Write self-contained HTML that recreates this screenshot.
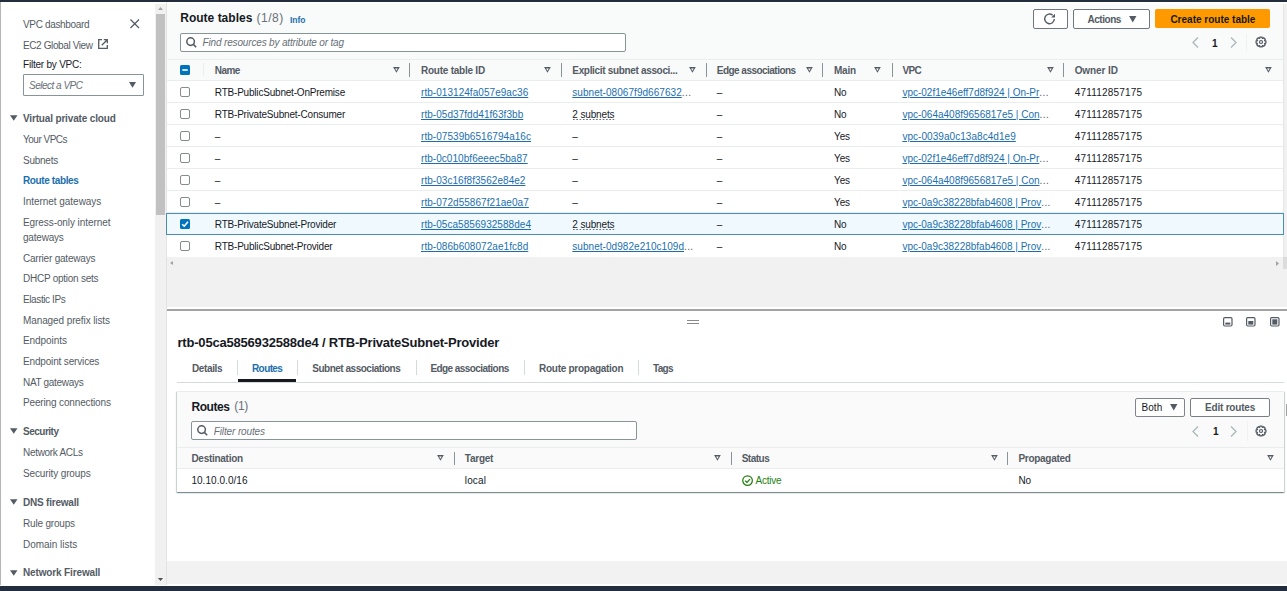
<!DOCTYPE html><html><head><meta charset="utf-8"><style>
html,body{margin:0;padding:0;}
body{width:1287px;height:591px;overflow:hidden;position:relative;background:#fff;font-family:"Liberation Sans",sans-serif;}
body>div{position:absolute;white-space:nowrap;}
body>svg{position:absolute;overflow:visible;}
.u{text-decoration:underline;text-underline-offset:0.5px;text-decoration-thickness:1px;}
.dot{border-bottom:1px dashed #879596;}
</style></head><body>
<div style="left:166px;top:4px;width:1121px;height:76px;background:#f9fafa;"></div>
<div style="left:166px;top:80px;width:1118px;height:176px;background:#fff;"></div>
<div style="left:166px;top:257px;width:1118px;height:12px;background:#f1f1f1;"></div>
<div style="left:166px;top:268.8px;width:1121px;height:38.6px;background:#f1f1f1;"></div>
<div style="left:166px;top:309px;width:1121px;height:1.5px;background:#a3a3a3;"></div>
<div style="left:166px;top:561px;width:1121px;height:23px;background:#f2f2f2;"></div>
<div style="left:0px;top:585.6px;width:1287px;height:5.4px;background:#222d3d;"></div>
<div style="left:0px;top:0px;width:1287px;height:2.4px;background:#222d3d;"></div>
<div style="left:0px;top:2px;width:1px;height:583px;background:#b5b5b5;"></div>
<div style="left:155px;top:4px;width:11px;height:581px;background:#f1f1f1;"></div>
<div style="left:156px;top:14px;width:9px;height:201px;background:#c1c1c1;"></div>
<div style="left:166px;top:2px;width:1px;height:583px;background:#e3e3e3;"></div>
<div style="left:1283px;top:4px;width:4px;height:253px;background:#f1f1f1;border-left:1px solid #e6e6e6;box-sizing:border-box;"></div>
<div style="left:1283px;top:257px;width:4px;height:12px;background:#dcdcdc;"></div>
<div style="left:23px;top:19.93px;font-size:10px;line-height:10px;color:#545b64;letter-spacing:-0.34px;">VPC dashboard</div>
<svg style="left:130px;top:19px" width="9.5" height="9.5" viewBox="0 0 10 10"><path d="M0.5 0.5L9.5 9.5M9.5 0.5L0.5 9.5" stroke="#545b64" stroke-width="1.3" fill="none"/></svg>
<div style="left:23px;top:41.03px;font-size:10px;line-height:10px;color:#545b64;letter-spacing:-0.39px;">EC2 Global View</div>
<svg style="left:98px;top:39px" width="10" height="10" viewBox="0 0 10 10"><path d="M4 0.7H0.7V9.3H9.3V6" stroke="#545b64" stroke-width="1.3" fill="none"/><path d="M3.8 6.2L9 1M5.8 0.7H9.3V4.2" stroke="#545b64" stroke-width="1.3" fill="none"/></svg>
<div style="left:23px;top:59.73px;font-size:10px;line-height:10px;color:#16191f;letter-spacing:-0.22px;">Filter by VPC:</div>
<div style="left:23px;top:74px;width:121px;height:21.6px;border:1px solid #879596;box-sizing:border-box;border-radius:1px;background:#fff;"></div>
<div style="left:29px;top:80.53px;font-size:10px;line-height:10px;color:#687078;font-style:italic;letter-spacing:-0.5px;">Select a VPC</div>
<svg style="left:128.5px;top:82.2px" width="7" height="6" viewBox="0 0 7 6"><path d="M0 0H7L3.5 5.8Z" fill="#545b64"/></svg>
<svg style="left:10px;top:114.7px" width="7.5" height="6" viewBox="0 0 8 6"><path d="M0 0H8L4 6Z" fill="#545b64"/></svg>
<div style="left:23px;top:113.53px;font-size:10px;line-height:10px;color:#545b64;font-weight:700;letter-spacing:-0.16px;">Virtual private cloud</div>
<div style="left:23px;top:134.84px;font-size:10px;line-height:10px;color:#545b64;letter-spacing:-0.5px;">Your VPCs</div>
<div style="left:23px;top:155.53px;font-size:10px;line-height:10px;color:#545b64;letter-spacing:-0.25px;">Subnets</div>
<div style="left:23px;top:176.23px;font-size:10px;line-height:10px;color:#1b6fae;font-weight:700;letter-spacing:-0.38px;">Route tables</div>
<div style="left:23px;top:196.94px;font-size:10px;line-height:10px;color:#545b64;letter-spacing:-0.04px;">Internet gateways</div>
<div style="left:23px;top:217.73px;font-size:10px;line-height:10px;color:#545b64;letter-spacing:-0.08px;">Egress-only internet</div>
<div style="left:23px;top:232.73px;font-size:10px;line-height:10px;color:#545b64;letter-spacing:-0.2px;">gateways</div>
<div style="left:23px;top:253.53px;font-size:10px;line-height:10px;color:#545b64;letter-spacing:-0.21px;">Carrier gateways</div>
<div style="left:23px;top:273.84px;font-size:10px;line-height:10px;color:#545b64;letter-spacing:-0.25px;">DHCP option sets</div>
<div style="left:23px;top:294.84px;font-size:10px;line-height:10px;color:#545b64;letter-spacing:-0.39px;">Elastic IPs</div>
<div style="left:23px;top:315.54px;font-size:10px;line-height:10px;color:#545b64;letter-spacing:-0.1px;">Managed prefix lists</div>
<div style="left:23px;top:335.94px;font-size:10px;line-height:10px;color:#545b64;letter-spacing:-0.06px;">Endpoints</div>
<div style="left:23px;top:356.54px;font-size:10px;line-height:10px;color:#545b64;letter-spacing:-0.16px;">Endpoint services</div>
<div style="left:23px;top:377.74px;font-size:10px;line-height:10px;color:#545b64;letter-spacing:-0.31px;">NAT gateways</div>
<div style="left:23px;top:398.04px;font-size:10px;line-height:10px;color:#545b64;letter-spacing:-0.15px;">Peering connections</div>
<svg style="left:10px;top:428.3px" width="7.5" height="6" viewBox="0 0 8 6"><path d="M0 0H8L4 6Z" fill="#545b64"/></svg>
<div style="left:23px;top:427.14px;font-size:10px;line-height:10px;color:#545b64;font-weight:700;letter-spacing:-0.5px;">Security</div>
<div style="left:23px;top:448.44px;font-size:10px;line-height:10px;color:#545b64;letter-spacing:-0.31px;">Network ACLs</div>
<div style="left:23px;top:468.74px;font-size:10px;line-height:10px;color:#545b64;letter-spacing:-0.13px;">Security groups</div>
<svg style="left:10px;top:499.09999999999997px" width="7.5" height="6" viewBox="0 0 8 6"><path d="M0 0H8L4 6Z" fill="#545b64"/></svg>
<div style="left:23px;top:497.94px;font-size:10px;line-height:10px;color:#545b64;font-weight:700;letter-spacing:-0.21px;">DNS firewall</div>
<div style="left:23px;top:518.93px;font-size:10px;line-height:10px;color:#545b64;letter-spacing:-0.18px;">Rule groups</div>
<div style="left:23px;top:539.53px;font-size:10px;line-height:10px;color:#545b64;letter-spacing:-0.02px;">Domain lists</div>
<svg style="left:10px;top:569.5px" width="7.5" height="6" viewBox="0 0 8 6"><path d="M0 0H8L4 6Z" fill="#545b64"/></svg>
<div style="left:23px;top:568.33px;font-size:10px;line-height:10px;color:#545b64;font-weight:700;letter-spacing:-0.14px;">Network Firewall</div>
<svg style="left:158px;top:7.4px" width="5" height="3" viewBox="0 0 5 3"><path d="M0 3H5L2.5 0Z" fill="#a3a3a3"/></svg>
<svg style="left:158px;top:578px" width="5" height="3" viewBox="0 0 5 3"><path d="M0 0H5L2.5 3Z" fill="#505050"/></svg>
<div style="left:180.3px;top:12.44px;font-size:12px;line-height:12px;color:#16191f;font-weight:700;">Route tables</div>
<div style="left:256.5px;top:12.44px;font-size:12px;line-height:12px;color:#687078;letter-spacing:0.5px;">(1/8)</div>
<div style="left:290px;top:16.10px;font-size:8.5px;line-height:8.5px;color:#1b6fae;font-weight:700;letter-spacing:-0.05px;">Info</div>
<div style="left:1033px;top:9px;width:34.5px;height:19.5px;box-sizing:border-box;border-radius:2px;border:1px solid #6f767d;background:#fff;"></div>
<svg style="left:1044px;top:13px" width="12" height="12" viewBox="0 0 12 12"><path d="M10.3 6A4.8 4.8 0 1 1 8.6 2.2" stroke="#545b64" stroke-width="1.4" fill="none"/><path d="M11 0.8V4.6H7.2Z" fill="#545b64"/></svg>
<div style="left:1073px;top:9px;width:77px;height:19.5px;box-sizing:border-box;border-radius:2px;border:1px solid #6f767d;background:#fff;"></div>
<div style="left:1087.4px;top:15.04px;font-size:10px;line-height:10px;color:#545b64;font-weight:700;letter-spacing:-0.45px;">Actions</div>
<svg style="left:1129px;top:15.5px" width="7.5" height="6.5" viewBox="0 0 8 7"><path d="M0 0H8L4 7Z" fill="#545b64"/></svg>
<div style="left:1155.3px;top:9.4px;width:114.3px;height:19px;box-sizing:border-box;border-radius:2px;background:#ff9900;border:1px solid #ff9900;border-radius:1.5px;"></div>
<div style="left:1170.4px;top:15.04px;font-size:10px;line-height:10px;color:#16191f;font-weight:700;">Create route table</div>
<svg style="left:1191.6px;top:37px" width="7" height="11" viewBox="0 0 7 11"><path d="M6 0.5L1 5.5L6 10.5" stroke="#aab7b8" stroke-width="1.3" fill="none"/></svg>
<div style="left:1212px;top:38.53px;font-size:10px;line-height:10px;color:#16191f;font-weight:700;">1</div>
<svg style="left:1229.8px;top:37px" width="7" height="11" viewBox="0 0 7 11"><path d="M1 0.5L6 5.5L1 10.5" stroke="#aab7b8" stroke-width="1.3" fill="none"/></svg>
<div style="left:1245.5px;top:33px;width:1px;height:19px;background:#f0f1f1;"></div>
<svg style="left:1254.6px;top:36.4px" width="12" height="12" viewBox="0 0 12 12"><path d="M9.65 4.63 L10.88 4.91 L10.88 7.09 L9.65 7.37 L9.55 7.61 L10.22 8.68 L8.68 10.22 L7.61 9.55 L7.37 9.65 L7.09 10.88 L4.91 10.88 L4.63 9.65 L4.39 9.55 L3.32 10.22 L1.78 8.68 L2.45 7.61 L2.35 7.37 L1.12 7.09 L1.12 4.91 L2.35 4.63 L2.45 4.39 L1.78 3.32 L3.32 1.78 L4.39 2.45 L4.63 2.35 L4.91 1.12 L7.09 1.12 L7.37 2.35 L7.61 2.45 L8.68 1.78 L10.22 3.32 L9.55 4.39Z" stroke="#545b64" stroke-width="1.3" fill="none" stroke-linejoin="round"/><circle cx="6" cy="6" r="1.5" stroke="#545b64" stroke-width="1.2" fill="none"/></svg>
<div style="left:180px;top:32.6px;width:446px;height:19.2px;box-sizing:border-box;border:1px solid #879596;border-radius:2px;background:#fff;"></div>
<svg style="left:185.6px;top:36.9px" width="11" height="11" viewBox="0 0 11 11"><circle cx="4.6" cy="4.6" r="3.8" stroke="#545b64" stroke-width="1.5" fill="none"/><path d="M7.4 7.4L10.2 10.2" stroke="#545b64" stroke-width="1.5"/></svg>
<div style="left:202.6px;top:38.33px;font-size:10px;line-height:10px;color:#687078;font-style:italic;letter-spacing:-0.16px;">Find resources by attribute or tag</div>
<div style="left:166px;top:59px;width:1117px;height:1px;background:#eaeded;"></div>
<div style="left:166px;top:79.5px;width:1117px;height:1px;background:#eaeded;"></div>
<svg style="left:180px;top:65px" width="10" height="10" viewBox="0 0 10 10"><rect x="0" y="0" width="10" height="10" rx="1.5" fill="#0073bb"/><path d="M2.3 5H7.7" stroke="#fff" stroke-width="1.6"/></svg>
<div style="left:203px;top:63px;width:1px;height:13px;background:#eaeded;"></div>
<div style="left:214.8px;top:66.33px;font-size:10px;line-height:10px;color:#545b64;font-weight:700;letter-spacing:-0.6px;">Name</div>
<svg style="left:392.8px;top:67px" width="7" height="6" viewBox="0 0 7 6"><path d="M0.1 0.1H6.8L3.45 5.7Z M2.1 1.5H4.8L3.45 3.8Z" fill="#545b64" fill-rule="evenodd"/></svg>
<div style="left:409.2px;top:63.2px;width:1px;height:13.7px;background:#879596;"></div>
<div style="left:421px;top:66.33px;font-size:10px;line-height:10px;color:#545b64;font-weight:700;letter-spacing:-0.24px;">Route table ID</div>
<svg style="left:544.3px;top:67px" width="7" height="6" viewBox="0 0 7 6"><path d="M0.1 0.1H6.8L3.45 5.7Z M2.1 1.5H4.8L3.45 3.8Z" fill="#545b64" fill-rule="evenodd"/></svg>
<div style="left:560.6px;top:63.2px;width:1px;height:13.7px;background:#879596;"></div>
<div style="left:572.3px;top:66.33px;font-size:10px;line-height:10px;color:#545b64;font-weight:700;letter-spacing:-0.33px;">Explicit subnet associ...</div>
<svg style="left:688.6px;top:67px" width="7" height="6" viewBox="0 0 7 6"><path d="M0.1 0.1H6.8L3.45 5.7Z M2.1 1.5H4.8L3.45 3.8Z" fill="#545b64" fill-rule="evenodd"/></svg>
<div style="left:705.8px;top:63.2px;width:1px;height:13.7px;background:#879596;"></div>
<div style="left:716.8px;top:66.33px;font-size:10px;line-height:10px;color:#545b64;font-weight:700;letter-spacing:-0.53px;">Edge associations</div>
<svg style="left:806px;top:67px" width="7" height="6" viewBox="0 0 7 6"><path d="M0.1 0.1H6.8L3.45 5.7Z M2.1 1.5H4.8L3.45 3.8Z" fill="#545b64" fill-rule="evenodd"/></svg>
<div style="left:822.2px;top:63.2px;width:1px;height:13.7px;background:#879596;"></div>
<div style="left:834px;top:66.33px;font-size:10px;line-height:10px;color:#545b64;font-weight:700;letter-spacing:-0.22px;">Main</div>
<svg style="left:874.2px;top:67px" width="7" height="6" viewBox="0 0 7 6"><path d="M0.1 0.1H6.8L3.45 5.7Z M2.1 1.5H4.8L3.45 3.8Z" fill="#545b64" fill-rule="evenodd"/></svg>
<div style="left:891.5px;top:63.2px;width:1px;height:13.7px;background:#879596;"></div>
<div style="left:902.4px;top:66.33px;font-size:10px;line-height:10px;color:#545b64;font-weight:700;letter-spacing:-0.6px;">VPC</div>
<svg style="left:1047px;top:67px" width="7" height="6" viewBox="0 0 7 6"><path d="M0.1 0.1H6.8L3.45 5.7Z M2.1 1.5H4.8L3.45 3.8Z" fill="#545b64" fill-rule="evenodd"/></svg>
<div style="left:1063.3px;top:63.2px;width:1px;height:13.7px;background:#879596;"></div>
<div style="left:1074.7px;top:66.33px;font-size:10px;line-height:10px;color:#545b64;font-weight:700;letter-spacing:-0.1px;">Owner ID</div>
<svg style="left:1265.2px;top:67px" width="7" height="6" viewBox="0 0 7 6"><path d="M0.1 0.1H6.8L3.45 5.7Z M2.1 1.5H4.8L3.45 3.8Z" fill="#545b64" fill-rule="evenodd"/></svg>
<div style="left:166px;top:101.5px;width:1117px;height:1px;background:#eaeded;"></div>
<div style="left:180px;top:87.2px;width:10px;height:10px;box-sizing:border-box;border:1.3px solid #858b8f;border-radius:2px;background:#fff;"></div>
<div style="left:214.8px;top:87.83px;font-size:10px;line-height:10px;color:#16191f;letter-spacing:-0.2px;">RTB-PublicSubnet-OnPremise</div>
<div class="u" style="left:421px;top:87.83px;font-size:10px;line-height:10px;color:#1b6fae;letter-spacing:0.05px;">rtb-013124fa057e9ac36</div>
<div style="left:572.3px;top:87.83px;font-size:10px;line-height:10px;color:#1b6fae;letter-spacing:0.05px;"><span class="u">subnet-08067f9d667632</span><span style="color:#545b64;letter-spacing:0.4px">...</span></div>
<div style="left:716.8px;top:87.83px;font-size:10px;line-height:10px;color:#16191f;">–</div>
<div style="left:834px;top:87.83px;font-size:10px;line-height:10px;color:#16191f;letter-spacing:-0.1px;">No</div>
<div style="left:902.4px;top:87.83px;font-size:10px;line-height:10px;color:#1b6fae;"><span class="u">vpc-02f1e46eff7d8f924 | On-Pr</span><span style="color:#545b64;letter-spacing:0.4px">...</span></div>
<div style="left:1074.7px;top:87.83px;font-size:10px;line-height:10px;color:#16191f;letter-spacing:0.19px;">471112857175</div>
<div style="left:166px;top:123.5px;width:1117px;height:1px;background:#eaeded;"></div>
<div style="left:180px;top:109.2px;width:10px;height:10px;box-sizing:border-box;border:1.3px solid #858b8f;border-radius:2px;background:#fff;"></div>
<div style="left:214.8px;top:109.83px;font-size:10px;line-height:10px;color:#16191f;letter-spacing:-0.2px;">RTB-PrivateSubnet-Consumer</div>
<div class="u" style="left:421px;top:109.83px;font-size:10px;line-height:10px;color:#1b6fae;letter-spacing:0.05px;">rtb-05d37fdd41f63f3bb</div>
<div style="left:572.3px;top:109.83px;font-size:10px;line-height:10px;color:#16191f;letter-spacing:-0.13px;">2 subnets</div>
<div style="left:572.6px;top:118.69999999999999px;width:43px;height:1.2px;background:linear-gradient(to right,#687078 45%,transparent 45%) repeat-x 0 0/3.3px 1.2px;"></div>
<div style="left:716.8px;top:109.83px;font-size:10px;line-height:10px;color:#16191f;">–</div>
<div style="left:834px;top:109.83px;font-size:10px;line-height:10px;color:#16191f;letter-spacing:-0.1px;">No</div>
<div style="left:902.4px;top:109.83px;font-size:10px;line-height:10px;color:#1b6fae;"><span class="u">vpc-064a408f9656817e5 | Con</span><span style="color:#545b64;letter-spacing:0.4px">...</span></div>
<div style="left:1074.7px;top:109.83px;font-size:10px;line-height:10px;color:#16191f;letter-spacing:0.19px;">471112857175</div>
<div style="left:166px;top:145.5px;width:1117px;height:1px;background:#eaeded;"></div>
<div style="left:180px;top:131.2px;width:10px;height:10px;box-sizing:border-box;border:1.3px solid #858b8f;border-radius:2px;background:#fff;"></div>
<div style="left:214.8px;top:131.84px;font-size:10px;line-height:10px;color:#16191f;letter-spacing:-0.2px;">–</div>
<div class="u" style="left:421px;top:131.84px;font-size:10px;line-height:10px;color:#1b6fae;letter-spacing:0.05px;">rtb-07539b6516794a16c</div>
<div style="left:572.3px;top:131.84px;font-size:10px;line-height:10px;color:#16191f;">–</div>
<div style="left:716.8px;top:131.84px;font-size:10px;line-height:10px;color:#16191f;">–</div>
<div style="left:834px;top:131.84px;font-size:10px;line-height:10px;color:#16191f;letter-spacing:-0.1px;">Yes</div>
<div style="left:902.4px;top:131.84px;font-size:10px;line-height:10px;color:#1b6fae;letter-spacing:0.05px;"><span class="u">vpc-0039a0c13a8c4d1e9</span></div>
<div style="left:1074.7px;top:131.84px;font-size:10px;line-height:10px;color:#16191f;letter-spacing:0.19px;">471112857175</div>
<div style="left:166px;top:167.5px;width:1117px;height:1px;background:#eaeded;"></div>
<div style="left:180px;top:153.2px;width:10px;height:10px;box-sizing:border-box;border:1.3px solid #858b8f;border-radius:2px;background:#fff;"></div>
<div style="left:214.8px;top:153.84px;font-size:10px;line-height:10px;color:#16191f;letter-spacing:-0.2px;">–</div>
<div class="u" style="left:421px;top:153.84px;font-size:10px;line-height:10px;color:#1b6fae;letter-spacing:0.05px;">rtb-0c010bf6eeec5ba87</div>
<div style="left:572.3px;top:153.84px;font-size:10px;line-height:10px;color:#16191f;">–</div>
<div style="left:716.8px;top:153.84px;font-size:10px;line-height:10px;color:#16191f;">–</div>
<div style="left:834px;top:153.84px;font-size:10px;line-height:10px;color:#16191f;letter-spacing:-0.1px;">Yes</div>
<div style="left:902.4px;top:153.84px;font-size:10px;line-height:10px;color:#1b6fae;"><span class="u">vpc-02f1e46eff7d8f924 | On-Pr</span><span style="color:#545b64;letter-spacing:0.4px">...</span></div>
<div style="left:1074.7px;top:153.84px;font-size:10px;line-height:10px;color:#16191f;letter-spacing:0.19px;">471112857175</div>
<div style="left:166px;top:189.5px;width:1117px;height:1px;background:#eaeded;"></div>
<div style="left:180px;top:175.2px;width:10px;height:10px;box-sizing:border-box;border:1.3px solid #858b8f;border-radius:2px;background:#fff;"></div>
<div style="left:214.8px;top:175.84px;font-size:10px;line-height:10px;color:#16191f;letter-spacing:-0.2px;">–</div>
<div class="u" style="left:421px;top:175.84px;font-size:10px;line-height:10px;color:#1b6fae;letter-spacing:0.05px;">rtb-03c16f8f3562e84e2</div>
<div style="left:572.3px;top:175.84px;font-size:10px;line-height:10px;color:#16191f;">–</div>
<div style="left:716.8px;top:175.84px;font-size:10px;line-height:10px;color:#16191f;">–</div>
<div style="left:834px;top:175.84px;font-size:10px;line-height:10px;color:#16191f;letter-spacing:-0.1px;">Yes</div>
<div style="left:902.4px;top:175.84px;font-size:10px;line-height:10px;color:#1b6fae;"><span class="u">vpc-064a408f9656817e5 | Con</span><span style="color:#545b64;letter-spacing:0.4px">...</span></div>
<div style="left:1074.7px;top:175.84px;font-size:10px;line-height:10px;color:#16191f;letter-spacing:0.19px;">471112857175</div>
<div style="left:166px;top:211.5px;width:1117px;height:1px;background:#eaeded;"></div>
<div style="left:180px;top:197.2px;width:10px;height:10px;box-sizing:border-box;border:1.3px solid #858b8f;border-radius:2px;background:#fff;"></div>
<div style="left:214.8px;top:197.84px;font-size:10px;line-height:10px;color:#16191f;letter-spacing:-0.2px;">–</div>
<div class="u" style="left:421px;top:197.84px;font-size:10px;line-height:10px;color:#1b6fae;letter-spacing:0.05px;">rtb-072d55867f21ae0a7</div>
<div style="left:572.3px;top:197.84px;font-size:10px;line-height:10px;color:#16191f;">–</div>
<div style="left:716.8px;top:197.84px;font-size:10px;line-height:10px;color:#16191f;">–</div>
<div style="left:834px;top:197.84px;font-size:10px;line-height:10px;color:#16191f;letter-spacing:-0.1px;">Yes</div>
<div style="left:902.4px;top:197.84px;font-size:10px;line-height:10px;color:#1b6fae;"><span class="u">vpc-0a9c38228bfab4608 | Prov</span><span style="color:#545b64;letter-spacing:0.4px">...</span></div>
<div style="left:1074.7px;top:197.84px;font-size:10px;line-height:10px;color:#16191f;letter-spacing:0.19px;">471112857175</div>
<div style="left:166px;top:213px;width:1118px;height:22px;box-sizing:border-box;border:1px solid #4a8db5;background:#f0f9fe;"></div>
<svg style="left:180px;top:219.2px" width="10" height="10" viewBox="0 0 10 10"><rect x="0" y="0" width="10" height="10" rx="1.5" fill="#0073bb"/><path d="M2.2 5.2L4.2 7.2L8 2.8" stroke="#fff" stroke-width="1.6" fill="none"/></svg>
<div style="left:214.8px;top:219.84px;font-size:10px;line-height:10px;color:#16191f;letter-spacing:-0.2px;">RTB-PrivateSubnet-Provider</div>
<div class="u" style="left:421px;top:219.84px;font-size:10px;line-height:10px;color:#1b6fae;letter-spacing:0.05px;">rtb-05ca5856932588de4</div>
<div style="left:572.3px;top:219.84px;font-size:10px;line-height:10px;color:#16191f;letter-spacing:-0.13px;">2 subnets</div>
<div style="left:572.6px;top:229.4px;width:43px;height:1.2px;background:linear-gradient(to right,#687078 45%,transparent 45%) repeat-x 0 0/3.3px 1.2px;"></div>
<div style="left:716.8px;top:219.84px;font-size:10px;line-height:10px;color:#16191f;">–</div>
<div style="left:834px;top:219.84px;font-size:10px;line-height:10px;color:#16191f;letter-spacing:-0.1px;">No</div>
<div style="left:902.4px;top:219.84px;font-size:10px;line-height:10px;color:#1b6fae;"><span class="u">vpc-0a9c38228bfab4608 | Prov</span><span style="color:#545b64;letter-spacing:0.4px">...</span></div>
<div style="left:1074.7px;top:219.84px;font-size:10px;line-height:10px;color:#16191f;letter-spacing:0.19px;">471112857175</div>
<div style="left:180px;top:241.2px;width:10px;height:10px;box-sizing:border-box;border:1.3px solid #858b8f;border-radius:2px;background:#fff;"></div>
<div style="left:214.8px;top:241.84px;font-size:10px;line-height:10px;color:#16191f;letter-spacing:-0.2px;">RTB-PublicSubnet-Provider</div>
<div class="u" style="left:421px;top:241.84px;font-size:10px;line-height:10px;color:#1b6fae;letter-spacing:0.05px;">rtb-086b608072ae1fc8d</div>
<div style="left:572.3px;top:241.84px;font-size:10px;line-height:10px;color:#1b6fae;letter-spacing:0.05px;"><span class="u">subnet-0d982e210c109d</span><span style="color:#545b64;letter-spacing:0.4px">...</span></div>
<div style="left:716.8px;top:241.84px;font-size:10px;line-height:10px;color:#16191f;">–</div>
<div style="left:834px;top:241.84px;font-size:10px;line-height:10px;color:#16191f;letter-spacing:-0.1px;">No</div>
<div style="left:902.4px;top:241.84px;font-size:10px;line-height:10px;color:#1b6fae;"><span class="u">vpc-0a9c38228bfab4608 | Prov</span><span style="color:#545b64;letter-spacing:0.4px">...</span></div>
<div style="left:1074.7px;top:241.84px;font-size:10px;line-height:10px;color:#16191f;letter-spacing:0.19px;">471112857175</div>
<svg style="left:170px;top:261px" width="3" height="4" viewBox="0 0 3 4"><path d="M3 0V4L0 2Z" fill="#a3a3a3"/></svg>
<svg style="left:1276px;top:260.5px" width="3" height="5" viewBox="0 0 3 5"><path d="M0 0V5L3 2.5Z" fill="#a3a3a3"/></svg>
<div style="left:686.7px;top:319.8px;width:12.2px;height:1.2px;background:#8a8a8a;"></div>
<div style="left:686.7px;top:322.6px;width:12.2px;height:1.2px;background:#8a8a8a;"></div>
<svg style="left:1222.8px;top:317px" width="9.6" height="9.6" viewBox="0 0 9.6 9.6"><rect x="0.6" y="0.6" width="8.4" height="8.4" rx="1.2" stroke="#545b64" stroke-width="1.2" fill="none"/><rect x="2.3" y="5.6" width="5" height="2" fill="#545b64"/></svg>
<svg style="left:1246.2px;top:317px" width="9.6" height="9.6" viewBox="0 0 9.6 9.6"><rect x="0.6" y="0.6" width="8.4" height="8.4" rx="1.2" stroke="#545b64" stroke-width="1.2" fill="none"/><rect x="2.3" y="4" width="5" height="3.6" fill="#545b64"/></svg>
<svg style="left:1269.6px;top:317px" width="9.6" height="9.6" viewBox="0 0 9.6 9.6"><rect x="0.6" y="0.6" width="8.4" height="8.4" rx="1.2" stroke="#545b64" stroke-width="1.2" fill="none"/><rect x="2.3" y="2.3" width="5" height="5.3" fill="#545b64"/></svg>
<div style="left:177.5px;top:336.30px;font-size:13px;line-height:13px;color:#16191f;font-weight:700;letter-spacing:-0.2px;">rtb-05ca5856932588de4 / RTB-PrivateSubnet-Provider</div>
<div style="left:177px;top:381.7px;width:1107px;height:1.2px;background:#d5dbdb;"></div>
<div style="left:192px;top:364.14px;font-size:10px;line-height:10px;color:#545b64;font-weight:700;letter-spacing:-0.37px;">Details</div>
<div style="left:252px;top:364.14px;font-size:10px;line-height:10px;color:#1b6fae;font-weight:700;letter-spacing:-0.6px;">Routes</div>
<div style="left:312.2px;top:364.14px;font-size:10px;line-height:10px;color:#545b64;font-weight:700;letter-spacing:-0.48px;">Subnet associations</div>
<div style="left:430.4px;top:364.14px;font-size:10px;line-height:10px;color:#545b64;font-weight:700;letter-spacing:-0.56px;">Edge associations</div>
<div style="left:539px;top:364.14px;font-size:10px;line-height:10px;color:#545b64;font-weight:700;letter-spacing:-0.27px;">Route propagation</div>
<div style="left:653px;top:364.14px;font-size:10px;line-height:10px;color:#545b64;font-weight:700;letter-spacing:-0.7px;">Tags</div>
<div style="left:237.4px;top:360.3px;width:1px;height:15.2px;background:#d5dbdb;"></div>
<div style="left:296.6px;top:360.3px;width:1px;height:15.2px;background:#d5dbdb;"></div>
<div style="left:415.5px;top:360.3px;width:1px;height:15.2px;background:#d5dbdb;"></div>
<div style="left:523.8px;top:360.3px;width:1px;height:15.2px;background:#d5dbdb;"></div>
<div style="left:638.2px;top:360.3px;width:1px;height:15.2px;background:#d5dbdb;"></div>
<div style="left:238.3px;top:379.3px;width:57.8px;height:2.6px;background:#16191f;"></div>
<div style="left:176.8px;top:391px;width:1107.5px;height:100.5px;box-sizing:border-box;background:#fafafa;box-shadow:0 1px 1px 0 rgba(0,28,36,.3),1px 1px 1px 0 rgba(0,28,36,.15),-1px 1px 1px 0 rgba(0,28,36,.15);border-top:1px solid #eaeded;"></div>
<div style="left:176.8px;top:469px;width:1107.5px;height:22px;background:#fff;"></div>
<div style="left:176.8px;top:447px;width:1107.5px;height:1px;background:#eaeded;"></div>
<div style="left:176.8px;top:468px;width:1107.5px;height:1px;background:#eaeded;"></div>
<div style="left:191.4px;top:400.54px;font-size:12px;line-height:12px;color:#16191f;font-weight:700;letter-spacing:-0.42px;">Routes</div>
<div style="left:234.2px;top:400.34px;font-size:12px;line-height:12px;color:#687078;letter-spacing:-0.3px;">(1)</div>
<div style="left:191px;top:421px;width:446px;height:19.3px;box-sizing:border-box;border:1px solid #879596;border-radius:2px;background:#fff;"></div>
<svg style="left:196.8px;top:425.4px" width="11" height="11" viewBox="0 0 11 11"><circle cx="4.6" cy="4.6" r="3.8" stroke="#545b64" stroke-width="1.5" fill="none"/><path d="M7.4 7.4L10.2 10.2" stroke="#545b64" stroke-width="1.5"/></svg>
<div style="left:213.8px;top:426.54px;font-size:10px;line-height:10px;color:#687078;font-style:italic;letter-spacing:-0.13px;">Filter routes</div>
<div style="left:1134.6px;top:397.6px;width:50.2px;height:19.3px;box-sizing:border-box;border-radius:2px;border:1px solid #808589;background:#fff;"></div>
<div style="left:1141.4px;top:403.04px;font-size:10px;line-height:10px;color:#16191f;letter-spacing:0.1px;">Both</div>
<svg style="left:1169.6px;top:404.2px" width="7.5" height="6.5" viewBox="0 0 8 7"><path d="M0 0H8L4 7Z" fill="#545b64"/></svg>
<div style="left:1190.3px;top:397.6px;width:80px;height:19.3px;box-sizing:border-box;border-radius:2px;border:1px solid #7a7f83;background:#fff;"></div>
<div style="left:1205px;top:403.04px;font-size:10px;line-height:10px;color:#545b64;font-weight:700;letter-spacing:-0.2px;">Edit routes</div>
<svg style="left:1192px;top:425.8px" width="7" height="11" viewBox="0 0 7 11"><path d="M6 0.5L1 5.5L6 10.5" stroke="#aab7b8" stroke-width="1.3" fill="none"/></svg>
<div style="left:1213px;top:427.34px;font-size:10px;line-height:10px;color:#16191f;font-weight:700;">1</div>
<svg style="left:1230.4px;top:425.8px" width="7" height="11" viewBox="0 0 7 11"><path d="M1 0.5L6 5.5L1 10.5" stroke="#aab7b8" stroke-width="1.3" fill="none"/></svg>
<div style="left:1246.5px;top:421px;width:1px;height:19.5px;background:#f0f1f1;"></div>
<svg style="left:1255.3px;top:425px" width="12" height="12" viewBox="0 0 12 12"><path d="M9.65 4.63 L10.88 4.91 L10.88 7.09 L9.65 7.37 L9.55 7.61 L10.22 8.68 L8.68 10.22 L7.61 9.55 L7.37 9.65 L7.09 10.88 L4.91 10.88 L4.63 9.65 L4.39 9.55 L3.32 10.22 L1.78 8.68 L2.45 7.61 L2.35 7.37 L1.12 7.09 L1.12 4.91 L2.35 4.63 L2.45 4.39 L1.78 3.32 L3.32 1.78 L4.39 2.45 L4.63 2.35 L4.91 1.12 L7.09 1.12 L7.37 2.35 L7.61 2.45 L8.68 1.78 L10.22 3.32 L9.55 4.39Z" stroke="#545b64" stroke-width="1.3" fill="none" stroke-linejoin="round"/><circle cx="6" cy="6" r="1.5" stroke="#545b64" stroke-width="1.2" fill="none"/></svg>
<div style="left:191.4px;top:454.34px;font-size:10px;line-height:10px;color:#545b64;font-weight:700;letter-spacing:-0.27px;">Destination</div>
<svg style="left:437.3px;top:455.3px" width="7" height="6" viewBox="0 0 7 6"><path d="M0.1 0.1H6.8L3.45 5.7Z M2.1 1.5H4.8L3.45 3.8Z" fill="#545b64" fill-rule="evenodd"/></svg>
<div style="left:453.6px;top:451.5px;width:1px;height:13.7px;background:#879596;"></div>
<div style="left:464.8px;top:454.34px;font-size:10px;line-height:10px;color:#545b64;font-weight:700;letter-spacing:-0.24px;">Target</div>
<svg style="left:713.7px;top:455.3px" width="7" height="6" viewBox="0 0 7 6"><path d="M0.1 0.1H6.8L3.45 5.7Z M2.1 1.5H4.8L3.45 3.8Z" fill="#545b64" fill-rule="evenodd"/></svg>
<div style="left:730.5px;top:451.5px;width:1px;height:13.7px;background:#879596;"></div>
<div style="left:741.7px;top:454.34px;font-size:10px;line-height:10px;color:#545b64;font-weight:700;letter-spacing:-0.5px;">Status</div>
<svg style="left:990.5px;top:455.3px" width="7" height="6" viewBox="0 0 7 6"><path d="M0.1 0.1H6.8L3.45 5.7Z M2.1 1.5H4.8L3.45 3.8Z" fill="#545b64" fill-rule="evenodd"/></svg>
<div style="left:1007px;top:451.5px;width:1px;height:13.7px;background:#879596;"></div>
<div style="left:1018.4px;top:454.34px;font-size:10px;line-height:10px;color:#545b64;font-weight:700;letter-spacing:-0.28px;">Propagated</div>
<svg style="left:1267px;top:455.3px" width="7" height="6" viewBox="0 0 7 6"><path d="M0.1 0.1H6.8L3.45 5.7Z M2.1 1.5H4.8L3.45 3.8Z" fill="#545b64" fill-rule="evenodd"/></svg>
<div style="left:191.4px;top:476.34px;font-size:10px;line-height:10px;color:#16191f;letter-spacing:0.05px;">10.10.0.0/16</div>
<div style="left:464.8px;top:476.34px;font-size:10px;line-height:10px;color:#16191f;letter-spacing:0.14px;">local</div>
<svg style="left:741.5px;top:474.5px" width="11.5" height="11.5" viewBox="0 0 12 12"><circle cx="5.8" cy="5.8" r="5" stroke="#267f14" stroke-width="1.3" fill="none"/><path d="M3.3 5.9L5.2 7.7L8.3 4.3" stroke="#267f14" stroke-width="1.4" fill="none"/></svg>
<div style="left:755.5px;top:476.34px;font-size:10px;line-height:10px;color:#267f14;letter-spacing:-0.25px;">Active</div>
<div style="left:1018.4px;top:476.34px;font-size:10px;line-height:10px;color:#16191f;">No</div>
<div style="left:1286px;top:404px;width:1px;height:12px;background:#a0a0a0;"></div>
</body></html>
